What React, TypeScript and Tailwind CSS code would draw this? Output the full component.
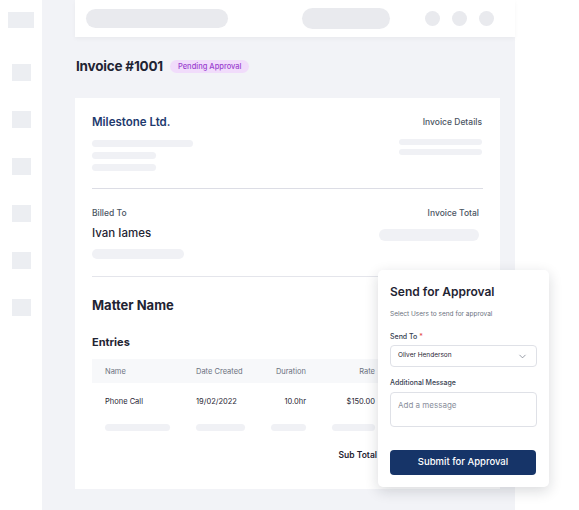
import { ChevronDown } from "lucide-react";

const Bar = ({ className }: { className: string }) => <div className={`rounded-full bg-[#f0f1f5] ${className}`} />;

export default function App() {
  return (
    <div className="relative flex h-[510px] w-[579px] overflow-hidden bg-white font-['Inter',sans-serif] text-[#1f2433]">
      {/* sidebar */}
      <div className="flex w-[42px] flex-col items-center pt-[12px]">
        <div className="h-[16px] w-[26px] bg-[#eceef2]" />
        <div className="mt-[36px] flex flex-col gap-[30px]">
          {[0, 1, 2, 3, 4, 5].map((i) => (
            <div key={i} className="h-[17px] w-[19px] bg-[#eceef2]" />
          ))}
        </div>
      </div>

      {/* main */}
      <div className="flex w-[473px] flex-col bg-[#f2f3f7]">
        <div className="ml-[33px] flex h-[37px] items-center bg-white pl-[11px] pr-[21px] shadow-[0_2px_4px_rgba(0,0,0,0.04)]">
          <div className="h-[19px] w-[142px] rounded-full bg-[#e9eaee]" />
          <div className="ml-[74px] h-[21px] w-[88px] rounded-full bg-[#e9eaee]" />
          <div className="ml-auto flex gap-[12px]">
            <div className="h-[15px] w-[15px] rounded-full bg-[#e9eaee]" />
            <div className="h-[15px] w-[15px] rounded-full bg-[#e9eaee]" />
            <div className="h-[15px] w-[15px] rounded-full bg-[#e9eaee]" />
          </div>
        </div>

        <div className="ml-[34px] mt-[19px] flex items-center gap-[7px]">
          <h1 className="text-[13.5px] font-bold tracking-[-0.2px] text-[#1f2433]">Invoice #1001</h1>
          <span className="rounded-full bg-[#f1dcfb] px-[8px] py-[1px] text-[7.5px] font-medium text-[#9b3fd0]">Pending Approval</span>
        </div>

        <div className="ml-[33px] mt-[22px] h-[391px] w-[425px] bg-white px-[17px] pt-[16px]">
          <div className="flex justify-between pr-[1px]">
            <div>
              <div className="text-[11.5px] font-semibold leading-[16px] text-[#1e3a6e]">Milestone Ltd.</div>
              <Bar className="mt-[10px] h-[7px] w-[101px]" />
              <Bar className="mt-[5px] h-[7px] w-[64px]" />
              <Bar className="mt-[5px] h-[7px] w-[64px]" />
            </div>
            <div className="flex flex-col items-end">
              <div className="text-[8.5px] font-medium leading-[16px] text-[#4b5563]">Invoice Details</div>
              <Bar className="mt-[9px] h-[6px] w-[83px]" />
              <Bar className="mt-[4px] h-[6px] w-[83px]" />
            </div>
          </div>

          <div className="mt-[17px] h-px bg-[#dcdde5]" />

          <div className="mt-[18px] flex justify-between">
            <div>
              <div className="text-[8.5px] font-medium leading-[12px] text-[#4b5563]">Billed To</div>
              <div className="mt-[6px] text-[11.5px] font-medium leading-[16px]">Ivan Iames</div>
              <Bar className="mt-[8px] h-[10px] w-[92px]" />
            </div>
            <div className="flex flex-col items-end pr-[4px]">
              <div className="text-[8.5px] font-medium leading-[12px] text-[#4b5563]">Invoice Total</div>
              <Bar className="mt-[10px] h-[12px] w-[100px]" />
            </div>
          </div>

          <div className="mt-[17px] h-px bg-[#e4e5eb]" />

          <div className="mt-[19px] text-[13px] font-bold leading-[18px]">Matter Name</div>
          <div className="mt-[20px] text-[11px] font-bold leading-[16px]">Entries</div>

          <div className="mt-[9px] text-[7.5px]">
            <div className="flex h-[24px] items-center bg-[#f7f8fa] pl-[13px] text-[#6b7280]">
              <div className="w-[91px]">Name</div>
              <div className="w-[60px]">Date Created</div>
              <div className="w-[50px] text-right">Duration</div>
              <div className="w-[69px] text-right">Rate</div>
            </div>
            <div className="flex h-[36px] items-center pl-[13px] text-[#1f2433]">
              <div className="w-[91px]">Phone Call</div>
              <div className="w-[60px]">19/02/2022</div>
              <div className="w-[50px] text-right">10.0hr</div>
              <div className="w-[69px] text-right">$150.00</div>
            </div>
            <div className="flex h-[16px] items-center pl-[13px]">
              <div className="w-[91px]"><Bar className="h-[7px] w-[65px]" /></div>
              <div className="w-[60px]"><Bar className="h-[7px] w-[49px]" /></div>
              <div className="flex w-[50px] justify-end"><Bar className="h-[7px] w-[35px]" /></div>
              <div className="flex w-[69px] justify-end"><Bar className="h-[7px] w-[43px]" /></div>
            </div>
            <div className="mt-[14px] flex items-center">
              <div className="w-[285px] text-right text-[8.5px] font-semibold">Sub Total</div>
            </div>
          </div>
        </div>
      </div>

      {/* send for approval popup */}
      <div className="absolute left-[378px] top-[270px] h-[217px] w-[171px] rounded-[5px] bg-white px-[12px] pt-[14px] shadow-[0_4px_14px_rgba(20,24,40,0.16)]">
        <div className="text-[12px] font-semibold leading-[16px]">Send for Approval</div>
        <div className="mt-[10px] text-[6.5px] text-[#6b7280]">Select Users to send for approval</div>
        <div className="mt-[12px] text-[7px] font-medium text-[#374151]">
          Send To <span className="text-[#e5484d]">*</span>
        </div>
        <div className="mt-[3px] flex h-[22px] items-center justify-between rounded-[4px] border border-[#dfe1e7] pl-[7px] pr-[8px] text-[6.5px]">
          <span>Oliver Henderson</span>
          <ChevronDown className="h-[11px] w-[11px] text-[#6b7280]" strokeWidth={1.5} />
        </div>
        <div className="mt-[11px] text-[7px] font-medium text-[#374151]">Additional Message</div>
        <div className="mt-[3px] h-[35px] rounded-[4px] border border-[#dfe1e7] px-[7px] pt-[6px] text-[8px] text-[#8a8f9c]">Add a message</div>
        <button className="mt-[23px] flex h-[25px] w-[146px] items-center justify-center rounded-[4px] bg-[#163468] text-[9.5px] font-medium text-white">
          Submit for Approval
        </button>
      </div>
    </div>
  );
}
